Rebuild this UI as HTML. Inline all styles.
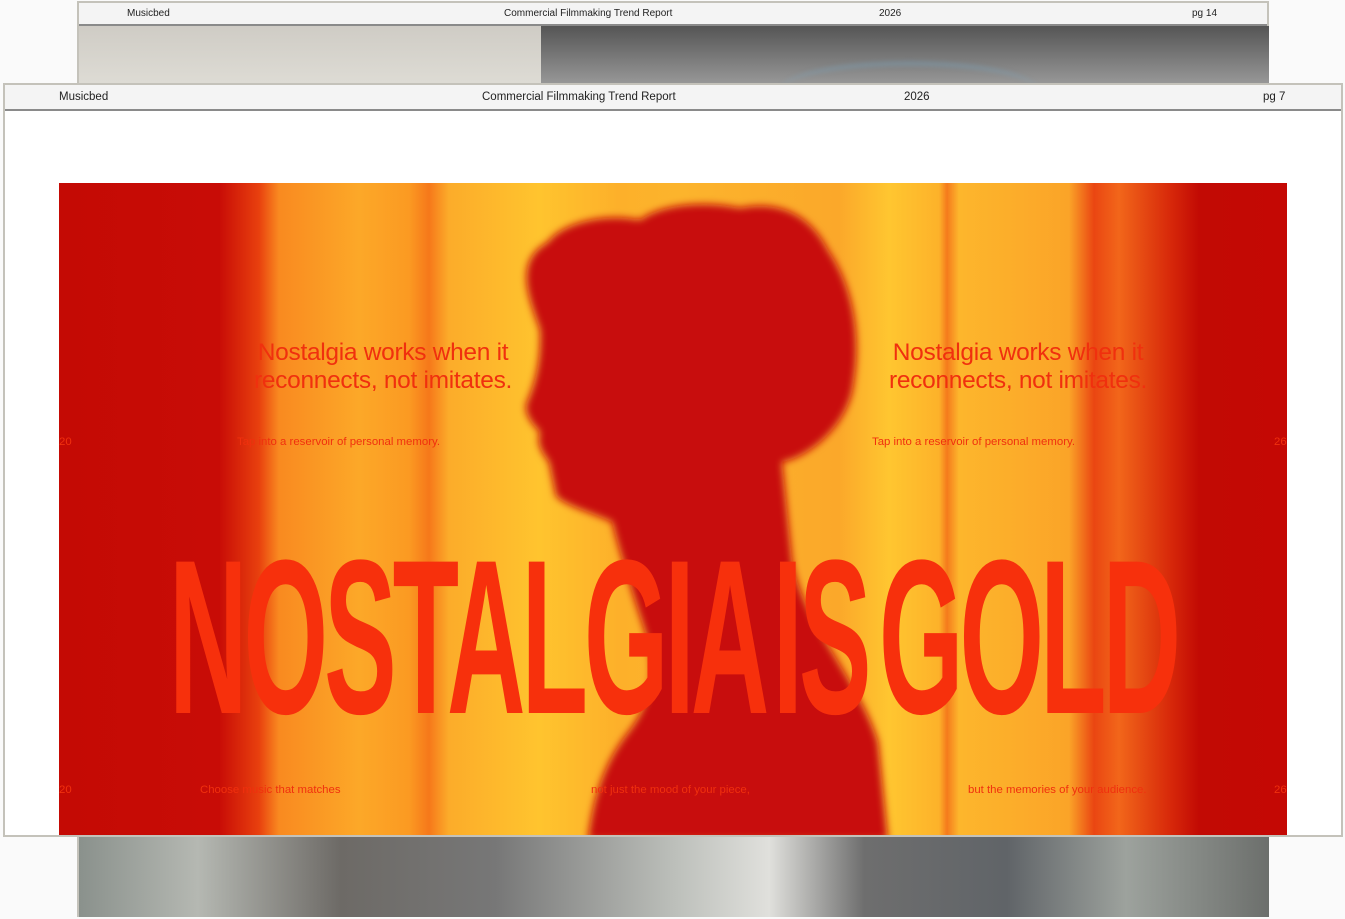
<!DOCTYPE html>
<html><head><meta charset="utf-8"><style>
*{margin:0;padding:0;box-sizing:border-box}
body{width:1345px;height:919px;overflow:hidden;background:#fafafa;font-family:"Liberation Sans",Arial,sans-serif;position:relative}
.back{position:absolute;left:77px;top:1px;width:1192px;height:916px;border:2px solid #c4c2ba;background:#ddd}
.hdr{position:absolute;left:0;right:0;top:0;background:#f4f4f4;border-bottom:2px solid #8a8a8a;color:#222}
.hdr span{position:absolute}
.front{position:absolute;left:3px;top:83px;width:1340px;height:754px;border:2px solid #c4c2ba;background:#fff}
.img{position:absolute;left:59px;top:183px;width:1228px;height:652px;overflow:hidden;
background:linear-gradient(90deg,#c40a04 0px,#c80c06 160px,#e8400e 200px,#f98a20 220px,#fca828 300px,#fb9a22 350px,#f6781a 370px,#fcac2a 390px,#ffc42e 480px,#fdb02a 560px,#fcb42c 620px,#fba82a 780px,#ffc630 830px,#fdb22a 880px,#f57a1c 888px,#fdb62c 900px,#fba428 1010px,#ea4612 1035px,#f2661a 1060px,#d82a0a 1110px,#c20a04 1140px,#c40804 1228px)}
.t{position:absolute;color:#f0300e;white-space:nowrap}
</style></head><body>
<div class="back">
 <div class="hdr" style="height:23px;font-size:10px">
  <span style="left:48px;top:5px">Musicbed</span>
  <span style="left:425px;top:5px">Commercial Filmmaking Trend Report</span>
  <span style="left:800px;top:5px">2026</span>
  <span style="left:1113px;top:5px">pg 14</span>
 </div>
 <div style="position:absolute;left:0;top:23px;width:462px;height:60px;background:linear-gradient(#cfccc5,#dedcd5)"></div>
 <div style="position:absolute;left:462px;top:23px;width:728px;height:60px;background:linear-gradient(#555,#9a9a9a)"></div>
 <div style="position:absolute;left:700px;top:58px;width:260px;height:60px;border-radius:50%;border-top:5px solid rgba(120,170,200,.3);filter:blur(2px)"></div>
 <div style="position:absolute;left:0;top:834px;width:1190px;height:80px;background:linear-gradient(90deg,#8a918c,#b5b8b2 10%,#6d6a66 22%,#777 35%,#bcbfba 50%,#e0e0dc 58%,#6e6e6e 66%,#606468 78%,#9da29d 88%,#6c6f6c)"></div>
</div>
<div class="front">
 <div class="hdr" style="height:26px;font-size:11.5px">
  <span style="left:54px;top:6px">Musicbed</span>
  <span style="left:477px;top:6px">Commercial Filmmaking Trend Report</span>
  <span style="left:899px;top:6px">2026</span>
  <span style="left:1258px;top:6px">pg 7</span>
 </div>
</div>
<div class="img">
 <svg width="1228" height="652" style="position:absolute;left:0;top:0">
  <defs><filter id="b"><feGaussianBlur stdDeviation="4"/></filter></defs>
  <g transform="translate(-59,-183)" filter="url(#b)">
  <path fill="#c8100a" d="M540,330 C530,300 512,262 548,242 C560,225 600,212 640,220 C660,205 700,200 740,208 C780,200 810,215 828,250 C855,290 862,340 852,392 C842,432 805,458 782,462 L792,560 C802,622 860,682 878,742 L888,840 L588,840 C594,792 606,760 630,730 C660,690 652,652 642,622 C632,592 622,560 612,522 C590,512 566,506 556,496 L549,462 C541,452 536,442 540,432 C530,422 522,410 528,400 C536,380 541,360 540,330 Z"/>
  </g>
 </svg>
 <div class="t" style="left:110px;top:344px;font-size:220px;font-weight:bold;letter-spacing:-8px;transform:scaleX(0.494);transform-origin:0 0;line-height:1;color:#f7300c;word-spacing:-30px">NOSTALGIA IS GOLD</div>
 <div class="t" style="left:195px;top:156px;font-size:24.5px;line-height:28px;text-align:center;letter-spacing:-0.3px">Nostalgia works when it<br>reconnects, not imitates.</div>
 <div class="t" style="left:830px;top:156px;font-size:24.5px;line-height:28px;text-align:center;letter-spacing:-0.3px">Nostalgia works when it<br>reconnects, not imitates.</div>
 <div class="t" style="left:0;top:253px;font-size:11.4px">20</div>
 <div class="t" style="left:178px;top:253px;font-size:11.4px">Tap into a reservoir of personal memory.</div>
 <div class="t" style="left:813px;top:253px;font-size:11.4px">Tap into a reservoir of personal memory.</div>
 <div class="t" style="left:1215px;top:253px;font-size:11.4px">26</div>
 <div class="t" style="left:0;top:601px;font-size:11.4px">20</div>
 <div class="t" style="left:141px;top:601px;font-size:11.4px">Choose music that matches</div>
 <div class="t" style="left:532px;top:601px;font-size:11.4px">not just the mood of your piece,</div>
 <div class="t" style="left:909px;top:601px;font-size:11.4px">but the memories of your audience.</div>
 <div class="t" style="left:1215px;top:601px;font-size:11.4px">26</div>
</div>
</body></html>
